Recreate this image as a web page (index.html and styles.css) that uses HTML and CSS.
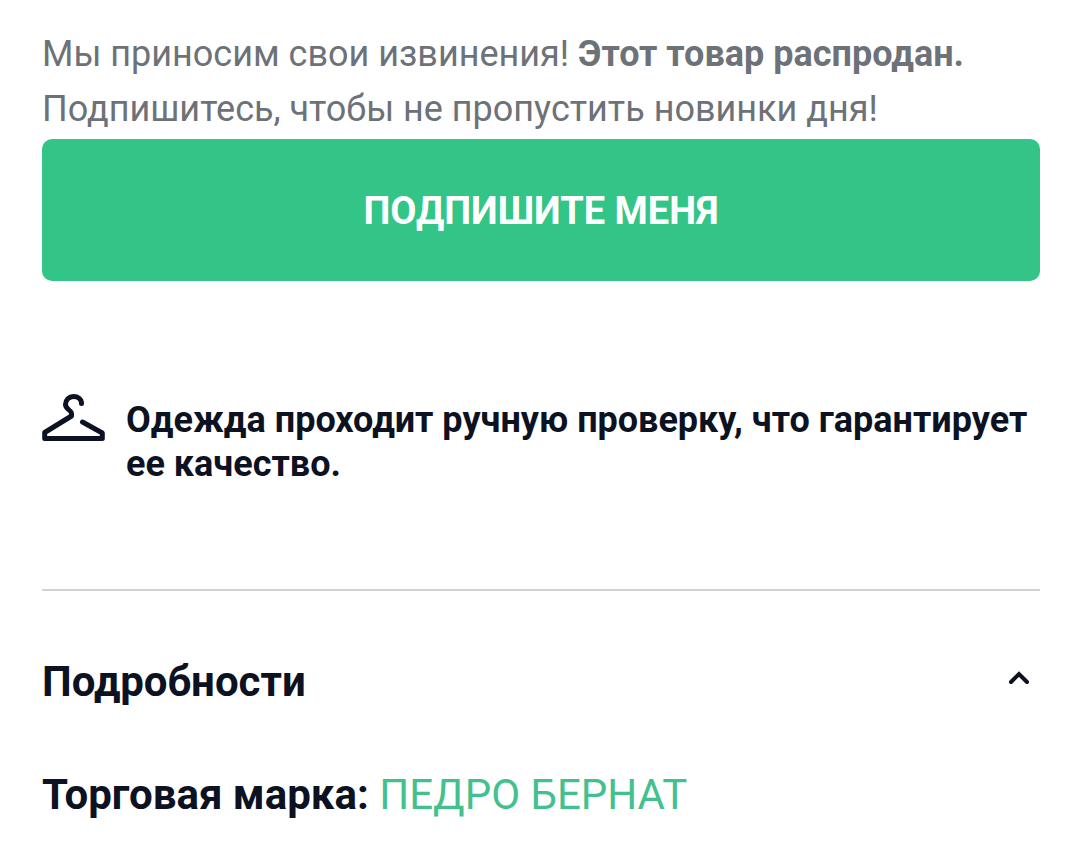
FILE: index.html
```html
<!DOCTYPE html>
<html lang="ru">
<head>
<meta charset="utf-8">
<meta name="viewport" content="width=device-width, initial-scale=1">
<title>ПЕДРО БЕРНАТ</title>
<link rel="stylesheet" href="styles.css">
</head>
<body>
<main class="product">
  <p class="notice">Мы приносим свои извинения! <strong>Этот товар распродан.</strong><br>Подпишитесь, чтобы не пропустить новинки дня!</p>
  <button class="subscribe" type="button">ПОДПИШИТЕ МЕНЯ</button>
  <div class="quality">
    <svg class="hanger" viewBox="0 0 63 49" aria-hidden="true">
      <path d="M39.500 10.500C39.500 6 36 3.500 31.500 3.500C27 3.500 23.500 7 23.500 11.500C23.500 16.500 29.500 17 29.500 20.500V23L2.700 39.500V45.500H60.300V40L40.500 29"/>
    </svg>
    <p class="quality-text">Одежда проходит ручную проверку, что гарантирует ее качество.</p>
  </div>
  <section class="details">
    <h2 class="details-heading">
      <button class="details-toggle" type="button" aria-expanded="true">
        <span>Подробности</span>
        <svg class="chevron" viewBox="0 0 22 26" aria-hidden="true"><path d="M3 13L11 5L19 13"/></svg>
      </button>
    </h2>
    <p class="brand"><strong>Торговая марка:</strong> <a class="brand-link" href="#">ПЕДРО БЕРНАТ</a></p>
  </section>
</main>
</body>
</html>
```
FILE: styles.css
```css
* { box-sizing: border-box; }
body { margin: 0; background: #fff; color: #0c1222; font-family: Roboto, sans-serif; }
p, h2 { margin: 0; }
strong { font-weight: 700; }
.product { padding: 27px 40px 24px 42px; }
.notice { color: #6d7278; font-size: 36px; line-height: 55px; }
.subscribe { display: block; width: 100%; margin-top: 2px; padding: 50px 20px 48px; border: 0; border-radius: 10px; background: #33c587; color: #fff; font: 700 38px/44px Roboto, sans-serif; }
.quality { display: flex; gap: 21px; margin-top: 112px; }
.hanger { flex: none; width: 63px; height: 49px; }
.quality-text { padding-top: 5px; font-size: 36px; font-weight: 700; line-height: 44px; }
.hanger path, .chevron path { fill: none; stroke: #0c1222; stroke-width: 5; stroke-linecap: round; stroke-linejoin: round; }
.chevron path { stroke-width: 4; stroke-linejoin: miter; }
.details { margin-top: 103px; border-top: 2px solid #d0d2d4; }
.details-heading { font-size: 42px; }
.details-toggle { display: flex; align-items: center; justify-content: space-between; width: 100%; padding: 64px 10px 0 0; border: 0; background: none; color: inherit; font: 700 42px/54px Roboto, sans-serif; text-align: left; }
.chevron { width: 22px; height: 26px; }
.brand { margin-top: 59px; font-size: 42px; line-height: 54px; }
.brand-link { color: #42c18e; text-decoration: none; }
```
